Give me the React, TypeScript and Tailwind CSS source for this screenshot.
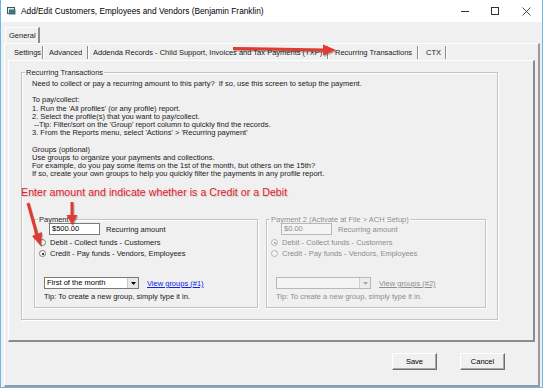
import React from "react";

const font = { fontFamily: '"Liberation Sans", Arial, sans-serif' };

function Radio({ checked, disabled }: { checked?: boolean; disabled?: boolean }) {
  return (
    <span
      className={`relative inline-block w-[7px] h-[7px] rounded-full border ${
        disabled ? "border-[#b5b5b5] bg-[#f4f4f4]" : "border-[#7a7a7a] bg-white"
      }`}
    >
      {checked && (
        <span
          className={`absolute left-[1.5px] top-[1.5px] w-[2px] h-[2px] rounded-full ${
            disabled ? "bg-[#9a9a9a]" : "bg-black"
          }`}
        />
      )}
    </span>
  );
}

function Dropdown({ value, disabled }: { value?: string; disabled?: boolean }) {
  return (
    <div
      className={`flex w-[95px] h-[12px] border ${
        disabled ? "border-[#b8b8b8] bg-[#f4f4f4]" : "border-[#7a7a7a] bg-white"
      }`}
    >
      <div className="flex-1 pl-[2px] leading-[10px] text-[7.5px] text-black">{value}</div>
      <div
        className={`w-[11px] h-full flex items-center justify-center border-l ${
          disabled ? "border-[#d0d0d0] bg-[#ececec]" : "border-[#c8c8c8] bg-[#e8e8e8]"
        }`}
      >
        <svg width="5" height="3" viewBox="0 0 5 3">
          <polygon points="0,0 5,0 2.5,3" fill={disabled ? "#a8a8a8" : "#000"} />
        </svg>
      </div>
    </div>
  );
}

function PaymentBox({
  title,
  amount,
  debit,
  dropdown,
  link,
  disabled,
  width,
}: {
  title: string;
  amount: string;
  debit: boolean;
  dropdown?: string;
  link: string;
  disabled?: boolean;
  width: string;
}) {
  const txt = disabled ? "text-[#8d8d8d]" : "text-[#1a1a1a]";
  return (
    <fieldset className={`${width} h-[93px] border border-[#c4c4c4] shadow-[1px_1px_0_#fff,inset_1px_1px_0_#fff] px-0`}>
      <legend className={`ml-[3px] px-[1px] text-[7.5px] leading-[9px] ${txt}`}>{title}</legend>
      <div className="flex flex-col">
        <div className="flex items-center pl-[14px] mt-[-1px]">
          <div
            className={`w-[51px] h-[12px] border pl-[2px] text-[7.5px] leading-[10px] ${
              disabled ? "border-[#b8b8b8] bg-[#f4f4f4] text-[#8d8d8d]" : "border-[#7a7a7a] bg-white text-black"
            }`}
          >
            {amount}
          </div>
          <span className={`ml-[6px] text-[7.5px] ${txt}`}>Recurring amount</span>
        </div>
        <div className="flex items-center pl-[4px] h-[11px] mt-[2px]">
          <Radio checked={debit} disabled={disabled} />
          <span className={`ml-[4px] text-[7.5px] ${txt}`}>Debit - Collect funds - Customers</span>
        </div>
        <div className="flex items-center pl-[4px] h-[11px]">
          <Radio checked={!debit} disabled={disabled} />
          <span className={`ml-[4px] text-[7.5px] ${txt}`}>Credit - Pay funds - Vendors, Employees</span>
        </div>
        <div className="flex items-center pl-[9px] mt-[18px]">
          <Dropdown value={dropdown} disabled={disabled} />
          <span
            className={`ml-[8px] text-[7.5px] underline ${disabled ? "text-[#8d8d8d]" : "text-[#0b22e0]"}`}
          >
            {link}
          </span>
        </div>
        <div className={`pl-[9px] mt-[3px] text-[7.5px] leading-[9px] ${txt}`}>
          Tip: To create a new group, simply type it in.
        </div>
      </div>
    </fieldset>
  );
}

export default function App() {
  const lines = [
    "Need to collect or pay a recurring amount to this party?  If so, use this screen to setup the payment.",
    "",
    "To pay/collect:",
    "1. Run the 'All profiles' (or any profile) report.",
    "2. Select the profile(s) that you want to pay/collect.",
    " --Tip: Filter/sort on the 'Group' report column to quickly find the records.",
    "3. From the Reports menu, select 'Actions' > 'Recurring payment'",
    "",
    "Groups (optional)",
    "Use groups to organize your payments and collections.",
    "For example, do you pay some items on the 1st of the month, but others on the 15th?",
    "If so, create your own groups to help you quickly filter the payments in any profile report.",
  ];

  return (
    <div
      className="relative w-[543px] h-[388px] bg-[#f0f0f0] border-l border-r border-b border-[#6cb6ea] flex flex-col overflow-hidden"
      style={font}
    >
      {/* title bar */}
      <div className="h-[22px] bg-white flex items-center shrink-0">
        <svg className="ml-[6px]" width="9" height="8" viewBox="0 0 9 8">
          <rect x="0.5" y="0.5" width="7" height="6" fill="#dfe8e8" stroke="#2f5b5e" />
          <rect x="2" y="2.5" width="6.5" height="5" fill="#3c7478" />
        </svg>
        <span className="ml-[5px] text-[8.3px] text-black">
          Add/Edit Customers, Employees and Vendors (Benjamin Franklin)
        </span>
        <div className="ml-auto flex items-center h-full">
          <div className="w-[30px] flex justify-center">
            <div className="w-[8px] h-px bg-[#333]" />
          </div>
          <div className="w-[30px] flex justify-center">
            <div className="w-[8px] h-[8px] border border-[#333]" />
          </div>
          <div className="w-[32px] flex justify-center">
            <svg width="9" height="9" viewBox="0 0 9 9">
              <path d="M0.5 0.5 L8.5 8.5 M8.5 0.5 L0.5 8.5" stroke="#333" strokeWidth="0.9" />
            </svg>
          </div>
        </div>
      </div>

      {/* body */}
      <div className="flex-1 flex flex-col pl-[3px] pr-[2px] pt-[5px] text-[#1a1a1a]">
        {/* General tab */}
        <div className="flex h-[16px]">
          <div className="ml-[1px] w-[35px] h-full border-l border-t border-white border-r-2 border-r-[#8c8c8c] bg-[#f0f0f0] text-[7.5px] leading-[15px] pl-[3px]">
            General
          </div>
        </div>

        {/* outer page */}
        <div className="flex-1 flex flex-col border-t border-l border-white border-r-2 border-b-2 border-r-[#9a9a9a] border-b-[#9a9a9a] pl-[3px] pr-[3px]">
          {/* inner tab row */}
          <div className="flex h-[15px] items-center text-[7.5px] mt-[1px]">
            {[
              { t: "Settings", w: "w-[36px]", pl: "pl-[6px]" },
              { t: "Advanced", w: "w-[45px]", pl: "pl-[5px]" },
              {
                t: "Addenda Records - Child Support, Invoices and Tax Payments (TXP)",
                w: "w-[240px]",
                pl: "pl-[4px]",
              },
              { t: "Recurring Transactions", w: "w-[90px]", pl: "pl-[6px]" },
              { t: "CTX", w: "w-[28px]", pl: "pl-[7px]" },
            ].map((tab) => (
              <div key={tab.t} className={`${tab.w} ${tab.pl} h-[14px] flex items-center justify-between overflow-hidden`}>
                <span className="whitespace-nowrap overflow-hidden">{tab.t}</span>
                <span className="shrink-0 w-[2px] h-[13px] border-l border-[#8c8c8c] border-r border-r-white" />
              </div>
            ))}
          </div>

          {/* inner page */}
          <div className="h-[282px] flex flex-col border-t border-l border-white border-r-2 border-b-2 border-r-[#8c8c8c] border-b-[#8c8c8c] pl-[12px] pt-[7px]">
            <fieldset className="w-[477px] h-[252px] border border-[#c4c4c4] shadow-[1px_1px_0_#fff,inset_1px_1px_0_#fff]">
              <legend className="ml-[3px] px-[1px] text-[7.5px] leading-[9px]">Recurring Transactions</legend>
              <div className="pl-[10px] pt-[3px] text-[7.5px] leading-[8.2px]">
                {lines.map((l, i) => (
                  <div key={i} className="h-[8.2px] whitespace-pre">
                    {l}
                  </div>
                ))}
              </div>
              <div className="flex gap-[8px] pl-[12px] mt-[37px]">
                <PaymentBox
                  title="Payment"
                  amount="$500.00"
                  debit={false}
                  dropdown="First of the month"
                  link="View groups (#1)"
                  width="w-[224px]"
                />
                <PaymentBox
                  title="Payment 2  (Activate at File > ACH Setup)"
                  amount="$0.00"
                  debit={true}
                  link="View groups (#2)"
                  disabled
                  width="w-[220px]"
                />
              </div>
            </fieldset>
          </div>

          {/* buttons */}
          <div className="flex justify-end gap-[23px] pr-[30px] mt-[11px]">
            {["Save", "Cancel"].map((b) => (
              <div
                key={b}
                className="w-[45px] h-[17px] flex items-center justify-center text-[7.5px] text-black bg-[#f0f0f0] border border-t-white border-l-white border-r-[#6e6e6e] border-b-[#6e6e6e] shadow-[inset_-1px_-1px_0_#a8a8a8]"
              >
                {b}
              </div>
            ))}
          </div>
        </div>
      </div>

      {/* annotations */}
      <div
        className="absolute left-[20px] top-[186px] text-[10.7px] leading-[13px] text-[#e2202c] whitespace-nowrap [text-shadow:1px_1px_1px_rgba(0,0,0,0.15)]"
        style={font}
      >
        Enter amount and indicate whether is a Credit or a Debit
      </div>
      <svg className="absolute left-0 top-0 pointer-events-none" width="543" height="388" viewBox="0 0 543 388">
        <g opacity="0.25" transform="translate(1,1.5)">
          <line x1="232" y1="48.5" x2="324" y2="50" stroke="#000" strokeWidth="3" />
          <polygon points="322,44.5 335,50 322,55.5" fill="#000" />
          <line x1="27" y1="203" x2="36" y2="235" stroke="#000" strokeWidth="3" />
          <polygon points="31,236 40,246 41,232" fill="#000" />
          <line x1="71" y1="202" x2="71" y2="216" stroke="#000" strokeWidth="3" />
          <polygon points="65.5,215 76.5,215 71,225" fill="#000" />
        </g>
        <line x1="232" y1="48.5" x2="324" y2="50" stroke="#e03b30" strokeWidth="3" />
        <polygon points="322,44.5 335,50 322,55.5" fill="#e03b30" />
        <line x1="27" y1="203" x2="36" y2="235" stroke="#e03b30" strokeWidth="3" />
        <polygon points="31,236 40,246 41,232" fill="#e03b30" />
        <line x1="71" y1="202" x2="71" y2="216" stroke="#e03b30" strokeWidth="3" />
        <polygon points="65.5,215 76.5,215 71,225" fill="#e03b30" />
      </svg>
    </div>
  );
}
